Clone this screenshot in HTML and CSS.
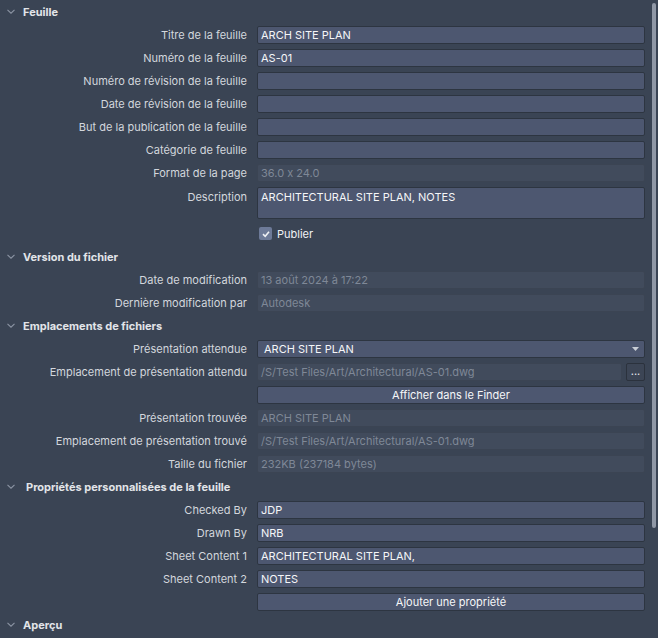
FILE: index.html
```html
<!DOCTYPE html>
<html lang="fr">
<head>
<meta charset="utf-8">
<link rel="stylesheet" href="styles.css">
</head>
<body>
<div class="panel">
  <section class="section">
    <div class="head"><svg class="chev" viewBox="0 0 8 5" width="8" height="5"><path d="M0.5 0.8 L4 4.2 L7.5 0.8" fill="none" stroke="currentColor" stroke-width="1.1"/></svg><span>Feuille</span></div>
    <div class="row"><label>Titre de la feuille</label><div class="field">ARCH SITE PLAN</div></div>
    <div class="row"><label>Numéro de la feuille</label><div class="field">AS-01</div></div>
    <div class="row"><label>Numéro de révision de la feuille</label><div class="field"></div></div>
    <div class="row"><label>Date de révision de la feuille</label><div class="field"></div></div>
    <div class="row"><label>But de la publication de la feuille</label><div class="field"></div></div>
    <div class="row"><label>Catégorie de feuille</label><div class="field"></div></div>
    <div class="row"><label>Format de la page</label><div class="field ro">36.0 x 24.0</div></div>
    <div class="row tall"><label>Description</label><div class="field area">ARCHITECTURAL SITE PLAN, NOTES</div></div>
    <div class="row"><span></span><div class="check"><span class="box"><svg viewBox="0 0 10 10" width="10" height="10"><path d="M2 5.2 L4.2 7.3 L8 2.8" fill="none" stroke="currentColor" stroke-width="1.6"/></svg></span>Publier</div></div>
  </section>
  <section class="section">
    <div class="head"><svg class="chev" viewBox="0 0 8 5" width="8" height="5"><path d="M0.5 0.8 L4 4.2 L7.5 0.8" fill="none" stroke="currentColor" stroke-width="1.1"/></svg><span>Version du fichier</span></div>
    <div class="row"><label>Date de modification</label><div class="field ro">13 août 2024 à 17:22</div></div>
    <div class="row"><label>Dernière modification par</label><div class="field ro">Autodesk</div></div>
  </section>
  <section class="section">
    <div class="head"><svg class="chev" viewBox="0 0 8 5" width="8" height="5"><path d="M0.5 0.8 L4 4.2 L7.5 0.8" fill="none" stroke="currentColor" stroke-width="1.1"/></svg><span>Emplacements de fichiers</span></div>
    <div class="row"><label>Présentation attendue</label><div class="field select"><span>ARCH SITE PLAN</span><svg class="tri" viewBox="0 0 7 4" width="7" height="4"><path d="M0 0 H7 L3.5 4 Z" fill="currentColor"/></svg></div></div>
    <div class="row"><label>Emplacement de présentation attendu</label><div class="pathline"><div class="field ro">/S/Test Files/Art/Architectural/AS-01.dwg</div><div class="dots">...</div></div></div>
    <div class="row"><span></span><div class="field btn">Afficher dans le Finder</div></div>
    <div class="row"><label>Présentation trouvée</label><div class="field ro">ARCH SITE PLAN</div></div>
    <div class="row"><label>Emplacement de présentation trouvé</label><div class="field ro">/S/Test Files/Art/Architectural/AS-01.dwg</div></div>
    <div class="row"><label>Taille du fichier</label><div class="field ro">232KB (237184 bytes)</div></div>
  </section>
  <section class="section">
    <div class="head shift"><svg class="chev" viewBox="0 0 8 5" width="8" height="5"><path d="M0.5 0.8 L4 4.2 L7.5 0.8" fill="none" stroke="currentColor" stroke-width="1.1"/></svg><span>Propriétés personnalisées de la feuille</span></div>
    <div class="row"><label>Checked By</label><div class="field">JDP</div></div>
    <div class="row"><label>Drawn By</label><div class="field">NRB</div></div>
    <div class="row"><label>Sheet Content 1</label><div class="field">ARCHITECTURAL SITE PLAN,</div></div>
    <div class="row"><label>Sheet Content 2</label><div class="field">NOTES</div></div>
    <div class="row"><span></span><div class="field btn">Ajouter une propriété</div></div>
  </section>
  <section class="section">
    <div class="head"><svg class="chev" viewBox="0 0 8 5" width="8" height="5"><path d="M0.5 0.8 L4 4.2 L7.5 0.8" fill="none" stroke="currentColor" stroke-width="1.1"/></svg><span>Aperçu</span></div>
  </section>
  <div class="scrollbar"></div>
</div>
</body>
</html>
```
FILE: styles.css
```css
html, body {
  margin: 0;
  padding: 0;
  background: #3a4454;
}
body {
  font-family: Inter, "Noto Sans", "Liberation Sans", sans-serif;
  font-size: 11px;
  color: #d3d7dd;
}
.panel {
  position: relative;
  width: 658px;
  height: 638px;
  overflow: hidden;
}
.head {
  height: 23px;
  display: flex;
  align-items: center;
  font-weight: 700;
  color: #e2e5e9;
  font-size: 11px;
}
.chev {
  color: #8b94a3;
  margin-left: 7px;
  margin-right: 8px;
}
.head.shift span { margin-left: 3px; }
.row {
  display: grid;
  grid-template-columns: 247px 388px;
  column-gap: 10px;
  height: 23px;
  align-items: center;
}
.row label {
  text-align: right;
  white-space: nowrap;
  color: #d3d7dd;
}
.row.tall {
  height: 38px;
  align-items: start;
}
.row.tall label { padding-top: 6px; }
.row.tall .field { margin-top: 3px; }
.field {
  box-sizing: border-box;
  height: 18px;
  border: 1px solid #2d3541;
  border-radius: 2px;
  background: #4d5770;
  color: #f5f6f8;
  padding: 0 3px;
  line-height: 16px;
  white-space: nowrap;
  overflow: hidden;
}
.field.ro {
  background: #414b5c;
  border-color: #3b4453;
  color: #7f8897;
}
.field.area {
  height: 32px;
  line-height: 16px;
  padding-top: 1px;
}
.field.select {
  display: flex;
  align-items: center;
  justify-content: space-between;
  padding: 0 5px 0 6px;
}
.tri { color: #c9ced6; }
.field.btn {
  text-align: center;
  color: #f5f6f8;
}
.pathline {
  display: flex;
  gap: 4px;
}
.pathline .field { flex: 1; }
.dots {
  box-sizing: border-box;
  width: 19px;
  height: 18px;
  border: 1px solid #2b323d;
  border-radius: 2px;
  background: #3c4555;
  color: #e8eaee;
  text-align: center;
  line-height: 14px;
  font-size: 11px;
}
.check {
  display: flex;
  align-items: center;
  gap: 5px;
  color: #f0f2f5;
  padding-left: 2px;
}
.box {
  box-sizing: border-box;
  width: 13px;
  height: 13px;
  border-radius: 2px;
  background: #6d7a98;
  color: #eef0f4;
  display: flex;
  align-items: center;
  justify-content: center;
}
.scrollbar {
  position: absolute;
  right: 2px;
  top: 3px;
  width: 4px;
  height: 525px;
  border-radius: 2px;
  background: #9098a6;
}
```
